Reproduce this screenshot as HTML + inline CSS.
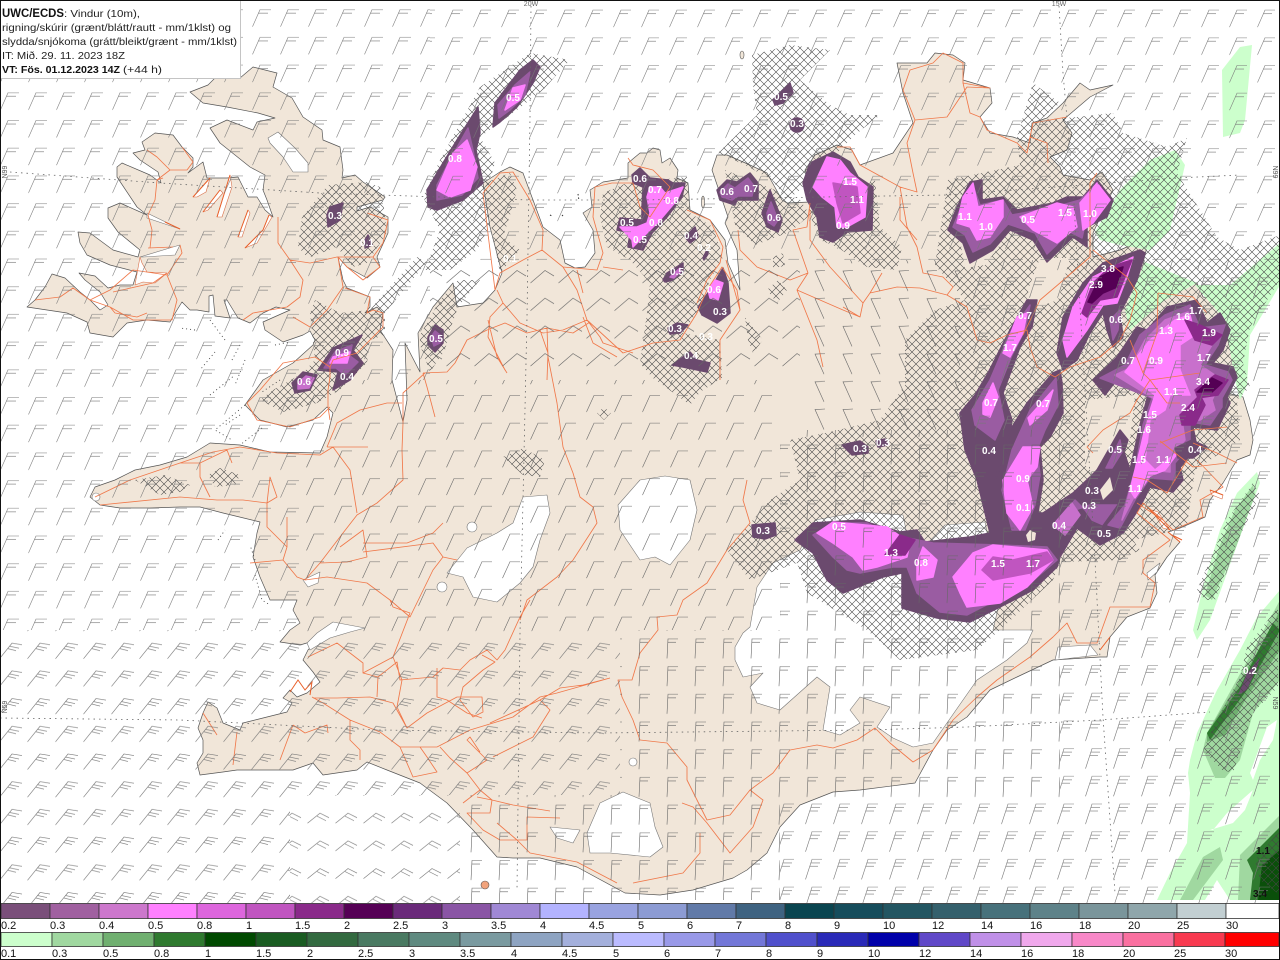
<!DOCTYPE html>
<html><head><meta charset="utf-8"><title>UWC/ECDS</title>
<style>html,body{margin:0;padding:0;background:#fff;width:1280px;height:960px;overflow:hidden}svg{display:block}
text{font-family:"Liberation Sans",sans-serif}
.l text{fill:#fff;font-size:10px;font-weight:bold;text-anchor:middle}
.k text{fill:#111;font-size:11px}
.a{fill:#6b4a6e;stroke:#6b4a6e}.b{fill:#9a5ca2;stroke:#9a5ca2}.c{fill:#c870cc;stroke:#c870cc}.p{fill:#ff80ff;stroke:#ff80ff}.d{fill:#c055c0;stroke:#c055c0}.e{fill:#8a2a8a;stroke:#8a2a8a}.f{fill:#550055;stroke:#550055}
.a,.b,.c,.p,.d,.e,.f{stroke-width:1.5;stroke-linejoin:round}
</style></head><body>
<svg width="1280" height="960" viewBox="0 0 1280 960" xmlns="http://www.w3.org/2000/svg">
<defs>
<pattern id="ph" width="8" height="8" patternUnits="userSpaceOnUse"><path d="M0 0L8 8M8 0L0 8" stroke="#444" stroke-width=".55" fill="none"/></pattern>
<pattern id="pw" x="0" y="120" width="28" height="27.7" patternUnits="userSpaceOnUse"><path d="M.5 17.5L8 .5L19 .5M6.5 4L16 4" stroke="#777" stroke-width=".6" fill="none"/></pattern>
<pattern id="pn" x="25" y="65" width="28" height="27.7" patternUnits="userSpaceOnUse"><path d="M.5 17.5L8 .5L18 .5M6.5 4L15 4" stroke="#777" stroke-width=".6" fill="none"/></pattern>
<pattern id="pe" x="21" y="665" width="28" height="27.7" patternUnits="userSpaceOnUse"><path d="M.5 20.5L7 .5L17 .5M6 4L15 4M5 7.5L13 7.5" stroke="#777" stroke-width=".6" fill="none"/></pattern>
<pattern id="ps" x="27" y="615" width="28" height="27.7" patternUnits="userSpaceOnUse"><path d="M.5 16L13 .5L23 2M10.5 3.5L20 5.5M9 6L17 8" stroke="#777" stroke-width=".6" fill="none"/></pattern>
<pattern id="pt" x="27" y="785" width="28" height="27.7" patternUnits="userSpaceOnUse"><path d="M.5 10.5L13 .5L22 5M10 3.5L19 8" stroke="#777" stroke-width=".6" fill="none"/></pattern>
<pattern id="pl" x="26" y="395" width="28" height="27.7" patternUnits="userSpaceOnUse"><path d="M.5 17L8 .5L18 .5" stroke="#666" stroke-width=".6" fill="none"/></pattern>
<pattern id="pm" x="26" y="270" width="28" height="27.7" patternUnits="userSpaceOnUse"><path d="M.5 13L15 .5L24 6" stroke="#666" stroke-width=".6" fill="none"/></pattern>
<pattern id="pv" x="22" y="583" width="28" height="27.7" patternUnits="userSpaceOnUse"><path d="M1 20L2 .5L12 .5M1.8 4L10 4" stroke="#666" stroke-width=".6" fill="none"/></pattern>
<pattern id="pb" x="2" y="270" width="28" height="27.7" patternUnits="userSpaceOnUse"><path d="M10 21L1 1L11 .5" stroke="#666" stroke-width=".6" fill="none"/></pattern>
</defs>
<rect width="1280" height="960" fill="#fff"/>

<!-- land -->
<polygon fill="#f1e6d9" stroke="#555" stroke-width=".7" stroke-linejoin="round" points="27,307 35,300 45,287 52,274 65,278 80,292 90,300 100,310 108,305 100,292 85,280 79,273 95,276 108,288 120,285 133,285 137,272 110,265 87,255 80,243 78,232 90,233 113,250 138,257 140,250 118,232 108,218 108,208 120,203 147,215 137,207 117,177 117,167 122,163 150,175 161,183 158,172 140,160 133,153 145,150 142,142 155,133 173,135 182,147 193,158 193,167 188,173 203,162 207,178 227,178 238,177 248,197 257,197 265,210 273,217 267,200 263,190 265,175 250,167 220,143 210,128 227,120 253,130 257,122 275,118 258,113 227,107 203,103 190,92 208,85 215,78 240,78 253,67 277,73 273,87 292,98 303,117 322,130 323,140 340,147 343,170 342,178 355,175 363,182 385,197 383,200 357,207 357,211 370,207 388,217 388,233 377,257 380,267 367,278 347,267 338,257 343,280 347,288 370,297 370,307 365,313 377,307 383,313 380,330 393,350 392,380 403,422 407,400 405,343 420,372 418,333 433,307 453,283 457,307 483,303 495,290 502,273 490,227 483,183 500,172 510,167 523,173 533,200 543,227 560,240 565,263 575,268 585,267 595,253 593,230 583,213 592,207 590,190 603,182 628,178 628,163 640,153 647,153 653,148 660,150 662,163 670,158 678,170 677,178 688,183 690,210 710,220 725,240 728,263 740,290 737,250 725,223 728,217 712,170 717,155 727,155 750,165 767,173 782,200 787,203 810,202 812,193 805,170 815,155 837,145 852,150 860,165 893,153 913,123 903,93 897,63 927,63 935,53 953,55 965,63 963,80 990,88 992,103 980,117 990,133 1013,137 1030,143 1032,123 1047,118 1063,103 1080,83 1090,90 1113,85 1090,97 1063,120 1072,133 1067,150 1050,157 1060,167 1063,175 1090,180 1102,172 1113,190 1093,233 1093,257 1120,250 1143,240 1147,247 1143,263 1177,278 1197,283 1203,297 1223,300 1232,330 1227,337 1237,373 1227,393 1243,397 1250,420 1253,440 1250,455 1237,460 1223,483 1210,500 1205,517 1180,528 1168,532 1180,542 1167,557 1155,575 1157,593 1150,608 1127,617 1110,637 1107,657 1100,657 1053,660 1017,677 990,690 967,717 947,730 933,750 915,783 860,790 833,792 800,805 780,827 767,853 747,870 733,878 693,890 660,895 625,893 577,867 540,858 513,858 497,857 473,830 447,803 420,783 387,770 367,762 357,770 323,775 313,763 293,770 267,770 237,770 223,772 200,775 197,763 203,753 203,740 198,728 203,713 208,702 217,708 223,723 240,730 243,723 263,718 287,712 292,703 283,698 290,690 297,697 307,693 320,682 313,672 303,660 308,650 317,640 300,645 280,642 290,630 300,623 293,610 297,600 270,600 260,577 253,557 257,533 260,522 223,513 200,507 180,507 150,508 120,508 100,505 90,497 95,487 115,480 135,470 160,465 187,457 210,443 240,445 270,452 320,453 327,437 333,413 327,407 313,420 287,427 260,420 245,405 263,380 293,363 313,345 315,340 310,331 303,335 283,342 265,330 263,322 290,310 276,307 263,313 250,323 238,318 227,300 224,300 230,318 215,316 213,295 209,296 209,312 197,310 190,310 182,302 177,310 170,322 147,320 127,323 113,337 90,333 87,322 67,313"/>
<!-- islands -->
<ellipse cx="742" cy="55" rx="2" ry="4" fill="#f1e6d9" stroke="#555" stroke-width=".6"/>
<ellipse cx="703" cy="202" rx="1.5" ry="6" fill="#f1e6d9" stroke="#555" stroke-width=".6"/>
<ellipse cx="485" cy="885" rx="4" ry="4" fill="#f1a37c" stroke="#555" stroke-width=".6"/>
<path d="M578 194l1 7M562 215l1 1M550 215l2 1" stroke="#333" stroke-width="1" stroke-dasharray="1.5 2" fill="none"/>

<!-- fjords, lakes, white -->
<g fill="#fff" stroke="#777" stroke-width=".6" stroke-linejoin="round">
<polygon points="140,257 173,247 180,245 175,255 143,257"/>
<polygon points="140,257 135,285 143,282 155,283 167,273 147,272 142,263" stroke="#d8704a"/>
<polygon points="147,213 180,229 165,224 147,218"/>
<polygon points="193,197 210,178 206,192 197,197" stroke="#d8704a"/>
<polygon points="203,212 220,190 223,193 208,210" stroke="#d8704a"/>
<polygon points="217,217 230,175 232,187 222,217" stroke="#d8704a"/>
<polygon points="238,237 248,210 250,213 242,237" stroke="#d8704a"/>
<polygon points="245,248 263,230 269,215 272,217 257,243" stroke="#d8704a"/>
<polygon points="307,643 317,633 333,622 365,628 350,632 330,638 310,650"/>
<polygon points="303,580 320,572 318,583 308,587"/>
<polygon points="1058,647 1090,645 1098,655 1055,660"/>
<polygon points="1152,510 1158,512 1170,530 1163,528" stroke="#d8704a"/>
<polygon points="1210,490 1223,495 1222,499 1212,495" stroke="#d8704a"/>
<polygon points="1147,573 1160,563 1157,572 1148,580"/>
<!-- glaciers -->
<polygon points="268,138 278,132 295,148 308,163 308,172 293,172 283,157 270,143"/>
<polygon points="447,573 467,548 497,533 513,523 523,497 547,495 550,513 540,540 533,567 520,583 497,602 473,597 463,577"/>
<circle cx="472" cy="527" r="5"/><circle cx="442" cy="587" r="5"/>
<polygon points="618,505 640,480 665,476 690,480 697,510 690,540 670,565 655,557 640,560 620,530"/>
<circle cx="633" cy="762" r="4"/>
<polygon points="600,803 623,792 650,803 655,827 663,847 650,857 610,853 590,853 587,833"/>
<polygon points="550,827 580,830 573,843 557,838"/>
<circle cx="96" cy="497" r="4"/>
<polygon points="735,647 743,633 750,627 757,587 773,563 800,550 815,520 860,512 903,515 912,560 945,525 985,522 1000,600 993,630 1033,630 1027,643 1007,660 977,680 963,700 933,743 913,747 893,738 877,727 890,707 860,697 850,710 860,723 840,735 823,730 830,687 817,677 780,710 757,703 750,687 763,673 743,677 735,660"/>
</g>

<!-- green precipitation -->
<g fill="#ccffcc">
<polygon points="1150,160 1175,150 1185,165 1170,230 1150,250 1120,245 1100,240 1095,232 1120,190"/>
<polygon points="1145,262 1197,283 1165,300 1130,330 1125,310"/>
<polygon points="1222,70 1240,47 1252,45 1245,120 1240,133 1223,137"/>
<polygon points="1280,243 1280,285 1250,335 1247,385 1240,400 1235,380 1225,320 1195,285 1230,285"/>
<polygon points="1257,472 1260,483 1247,517 1227,573 1210,620 1197,640 1193,630 1203,587 1220,530 1237,493"/>
<polygon points="1280,590 1257,617 1240,650 1217,690 1197,733 1190,760 1188,773 1190,793 1187,843 1170,873 1157,900 1280,900"/>
<polygon fill="#fff" points="1250,773 1267,727 1277,720 1273,740 1260,760 1253,780"/>
<polygon fill="#fff" points="1213,830 1227,813 1253,790 1245,810 1233,823 1210,830"/>
<polygon fill="#fff" points="1217,880 1230,900 1205,900"/>
<polygon fill="#a0d8a0" points="1253,485 1255,495 1235,550 1212,600 1205,595 1220,545 1235,510"/>
<polygon fill="#a0d8a0" points="1280,600 1280,680 1253,713 1240,760 1225,778 1215,778 1203,750 1207,733 1245,665"/>
<polygon fill="#70b070" points="1280,610 1280,650 1247,697 1225,735 1207,742 1207,733 1240,680 1265,640"/>
<polygon fill="#2f7a2f" points="1273,623 1280,630 1247,690 1210,740 1207,733 1240,687 1260,647"/>
<polygon fill="#a0d8a0" points="1220,847 1203,857 1180,900 1193,900 1223,860"/>
<polygon fill="#a0d8a0" points="1280,815 1240,855 1238,900 1280,900"/>
<polygon fill="#2f7a2f" points="1280,827 1247,860 1253,873 1250,900 1280,900"/>
<polygon fill="#0a4f0a" points="1280,850 1262,865 1258,900 1280,900"/>
<polygon fill="#6b4a6e" points="1260,657 1258,665 1247,690 1238,695 1247,673"/>
</g>

<!-- hatching -->
<g fill="url(#ph)">
<polygon points="302,217 328,185 367,182 380,187 383,200 387,233 367,263 353,267 337,247 308,258 298,247"/>
<polygon points="378,300 417,257 427,262 385,313 385,335 370,340 367,363 340,390 317,403 283,412 260,400 273,390 303,373 315,360 310,313 315,300 340,313 370,310"/>
<polygon points="440,300 458,280 480,280 458,307 450,330 445,350 430,372 420,345 420,335"/>
<polygon points="423,197 440,160 480,87 530,53 570,60 543,90 513,113 480,137 495,163 487,190 490,225 477,250 450,270 425,270 440,230"/>
<polygon points="485,183 510,173 517,190 510,215 503,237 520,250 500,273 492,230"/>
<polygon points="603,193 627,183 687,177 690,213 713,227 723,257 710,280 700,307 683,333 720,340 722,378 700,392 690,405 653,378 640,363 647,313 650,283 630,260 607,247 600,217"/>
<polygon points="752,55 790,45 830,50 800,80 830,105 850,115 880,115 855,135 830,160 800,190 787,200 772,180 745,165 718,153 757,115 753,85"/>
<polygon points="725,170 800,200 810,215 790,232 755,245 735,225"/>
<polygon points="808,210 875,180 880,227 902,247 897,270 867,267 837,247 820,240"/>
<polygon points="773,257 783,253 785,266 773,268"/>
<polygon points="767,290 778,280 787,290 777,303"/>
<polygon points="745,317 763,340 753,353 748,340"/>
<polygon points="503,457 523,448 545,460 540,477 523,475"/>
<polygon points="208,475 220,468 240,475 235,485 215,487"/>
<polygon points="135,480 165,475 190,485 180,492 160,495"/>
<polygon points="604,407 611,413 604,420 597,413"/>
<polygon points="948,180 1020,165 1017,137 1033,83 1060,103 1040,120 1077,117 1113,113 1123,133 1167,147 1187,138 1177,173 1217,237 1240,250 1280,235 1280,280 1250,327 1243,363 1250,387 1237,400 1240,440 1195,470 1187,525 1170,532 1133,540 1140,550 1120,560 1060,562 1053,580 1000,630 977,650 900,660 867,630 807,593 797,563 750,580 727,550 770,500 800,480 790,440 830,432 880,420 905,385 905,340 935,310 965,300 935,265"/>
<polygon points="1253,483 1260,495 1238,540 1215,600 1205,600 1197,590 1210,560 1227,520"/>
<polygon points="1247,647 1278,607 1278,687 1253,713 1233,773 1222,770 1203,750 1217,720 1240,677"/>
<polygon points="1280,830 1255,860 1260,880 1280,895"/>
</g>
<!-- unhatched land patches -->
<g fill="#f1e6d9">
<polygon points="1040,258 1070,258 1058,300 1030,310 1028,290"/>
<polygon points="1085,400 1135,395 1130,440 1100,480 1085,465"/>
<polygon points="960,240 1000,245 985,265 965,268"/>
</g>

<!-- purple precipitation -->
<g>
<polygon class="a" points="428,207 427,190 443,163 457,140 478,107 480,133 476,150 483,183 463,200 437,210"/>
<polygon class="b" points="437,200 437,185 450,160 468,128 473,150 478,178 462,195"/>
<polygon class="p" points="437,190 453,153 467,140 477,167 470,190 450,197"/>
<polygon class="a" points="493,127 495,103 520,70 533,60 540,67 533,83 517,107 500,122"/>
<polygon class="b" points="499,118 498,105 515,85 530,72 525,95 510,110"/>
<polygon class="p" points="505,110 513,88 525,85 520,100"/>
<polygon class="a" points="327,215 330,207 343,203 340,220 328,227"/>
<polygon class="a" points="365,240 368,235 372,245 365,248"/>
<polygon class="a" points="318,370 333,348 362,335 353,350 363,363 350,380 333,390 338,372"/>
<polygon class="b" points="324,368 335,352 352,345 350,356 358,362 345,375 336,368"/>
<polygon class="p" points="333,357 350,352 347,363 330,363"/>
<polygon class="a" points="292,383 303,372 317,375 310,390 295,393"/>
<polygon class="c" points="298,383 306,376 314,378 309,388 298,389"/>
<polygon class="a" points="428,337 435,325 443,330 443,343 435,352 428,345"/>
<polygon class="b" points="431,337 435,331 440,335 440,343 434,346"/>
<polygon class="a" points="632,175 640,168 650,178 668,180 673,183 685,183 682,197 667,217 652,233 643,250 628,247 630,233 617,230 620,218 642,220 642,207 643,187 633,183"/>
<polygon class="p" points="647,197 650,187 660,187 665,193 683,187 677,200 660,220 650,230 633,247 632,240 620,227 637,227 647,223 650,213"/>
<polygon class="a" points="685,237 695,227 698,237 690,243"/>
<polygon class="a" points="703,258 707,250 708,254 704,260"/>
<polygon class="a" points="663,280 667,273 683,263 683,273 673,280 665,282"/>
<polygon class="c" points="670,277 680,268 680,272 674,278"/>
<polygon class="a" points="698,307 710,290 723,268 728,283 730,313 717,323 702,315"/>
<polygon class="p" points="708,290 715,280 723,283 718,300 710,298"/>
<polygon class="a" points="668,328 677,323 688,325 680,333 670,334"/>
<polygon class="a" points="672,365 690,352 697,360 710,363 707,372 683,367"/>
<polygon class="a" points="717,190 727,180 737,182 750,173 758,183 758,200 737,200 735,205 720,200"/>
<polygon class="b" points="720,192 728,184 735,188 748,178 754,186 752,196 738,196 732,200 722,197"/>
<polygon class="a" points="762,213 770,190 782,220 778,232 767,227"/>
<polygon class="b" points="767,213 771,202 778,220 774,226 768,222"/>
<polygon class="a" points="773,100 790,83 793,93 783,103 775,105"/>
<circle class="a" cx="797" cy="125" r="7"/>
<polygon class="a" points="803,183 810,163 833,152 850,162 858,177 873,187 872,230 847,232 833,242 820,237 817,217 807,200"/>
<polygon class="p" points="813,187 827,157 840,160 850,173 867,187 865,217 847,227 837,227 835,207 822,197"/>
<polygon class="d" points="833,183 857,187 860,213 843,223 837,203"/>
<polygon class="a" points="948,230 957,207 970,182 982,180 982,200 1003,197 1017,210 1053,203 1067,197 1083,197 1097,180 1113,200 1107,217 1087,227 1087,247 1073,237 1047,262 1033,240 1010,230 993,250 970,263 963,243"/>
<polygon class="b" points="953,227 962,205 973,186 980,205 1003,200 1012,215 1055,207 1080,200 1097,184 1110,200 1085,225 1082,238 1070,232 1047,254 1035,233 1008,224 990,244 973,252 965,235"/>
<polygon class="p" points="957,223 963,197 973,183 978,207 1003,200 1003,217 990,237 977,240 970,227"/>
<polygon class="p" points="1020,217 1057,203 1073,207 1077,227 1057,243 1033,230"/>
<polygon class="p" points="1080,203 1097,183 1110,200 1093,223 1083,230"/>
<polygon class="a" points="1140,250 1145,253 1137,280 1120,313 1123,337 1113,347 1107,330 1103,313 1090,333 1077,360 1063,370 1057,353 1063,317 1083,283 1103,263"/>
<polygon class="p" points="1133,257 1127,277 1117,303 1103,305 1087,330 1067,357 1063,340 1073,307 1093,277"/>
<polygon class="e" points="1132,260 1125,277 1117,297 1100,300 1087,317 1082,313 1093,283 1110,267"/>
<polygon class="f" points="1123,267 1117,287 1103,293 1092,303 1088,302 1100,277 1113,270"/>
<polygon class="b" points="1110,320 1120,310 1118,330 1113,340"/>
<!-- legs -->
<polygon class="a" points="1027,300 1037,300 1032,327 1020,347 1003,393 1012,420 1007,453 995,480 1012,427 1027,403 1053,373 1060,370 1062,383 1063,413 1050,437 1040,447 1043,480 1038,513 1043,513 1073,493 1090,477 1107,460 1115,470 1120,440 1130,470 1123,533 1100,545 1077,528 1060,557 1057,567 1033,590 1000,607 970,622 937,618 902,608 902,573 883,577 843,593 827,580 813,553 795,540 813,523 860,520 900,532 917,530 925,542 970,537 990,533 977,480 965,450 960,413 975,395 988,373 1010,330"/>
<polygon class="a" points="1097,470 1120,430 1128,440 1118,470 1100,482"/>
<polygon class="b" points="1106,468 1120,440 1122,452 1112,468"/>
<polygon class="b" points="1010,333 1030,305 1025,330 1012,355 998,390 1004,420 995,440 975,425 972,410 990,380"/>
<polygon class="b" points="1030,410 1056,378 1058,405 1045,430 1037,450 1040,475 1035,505 1025,530 1012,530 1002,490 1012,450"/>
<polygon class="p" points="1017,317 1027,313 1023,333 1010,357 1003,353"/>
<polygon class="p" points="983,403 993,383 998,397 990,417 983,414"/>
<polygon class="p" points="1053,390 1047,410 1030,425 1028,418"/>
<polygon class="p" points="1003,480 1023,447 1040,447 1037,467 1027,480 1033,507 1020,530 1007,513"/>
<polygon class="b" points="1060,520 1075,500 1085,510 1092,520 1115,530 1118,505 1090,505 1075,510"/>
<polygon class="c" points="1053,525 1072,503 1080,515 1065,535"/>
<polygon class="b" points="813,535 833,523 867,523 893,535 933,543 1000,545 1047,547 1057,560 1030,583 1000,598 967,615 940,612 917,593 907,567 893,567 860,573 847,570 833,557"/>
<polygon class="p" points="817,533 833,522 887,527 910,543 907,557 877,567 863,570 853,557 833,543"/>
<polygon class="p" points="917,563 923,547 937,560 933,577 917,580"/>
<polygon class="p" points="953,577 973,553 993,545 1047,550 1053,560 1027,587 1000,603 967,607 960,593"/>
<polygon class="d" points="982,570 993,557 1013,560 1047,552 1053,560 1030,573 993,580"/>
<polygon class="e" points="885,555 900,535 915,540 905,555"/>
<polygon fill="#f1e6d9" points="1026,535 1030,530 1036,533 1035,540 1028,542"/>
<!-- east mass -->
<polygon class="a" points="1093,380 1117,357 1137,327 1147,330 1167,307 1197,300 1207,323 1220,313 1230,330 1223,350 1213,363 1233,367 1237,377 1227,397 1230,403 1217,430 1193,427 1197,447 1180,467 1183,480 1173,492 1150,487 1140,507 1123,533 1100,530 1118,505 1130,470 1140,425 1148,395 1120,385 1115,382 1105,395"/>
<polygon class="b" points="1100,378 1125,365 1140,335 1165,315 1190,305 1200,328 1225,325 1218,345 1205,365 1228,372 1232,380 1222,398 1222,407 1210,425 1190,422 1190,445 1175,463 1175,480 1150,478 1135,500 1120,528 1108,525 1125,505 1135,470 1143,425 1152,398"/>
<polygon class="c" points="1115,375 1130,368 1145,340 1165,320 1188,312 1196,335 1215,340 1200,365 1222,380 1212,400 1215,410 1200,420 1182,420 1185,440 1170,458 1170,472 1150,470 1135,495 1122,520 1130,490 1140,460 1148,430 1156,400"/>
<polygon class="p" points="1125,372 1150,340 1175,320 1190,315 1195,335 1180,345 1180,370 1190,395 1170,395 1165,410 1150,420 1145,460 1155,470 1180,450 1165,470 1150,476 1135,498 1130,490 1140,450 1147,420 1155,395"/>
<polygon class="e" points="1185,320 1200,325 1222,335 1212,345 1195,340"/>
<polygon class="e" points="1195,390 1215,375 1228,380 1218,395 1198,398"/>
<polygon class="f" points="1197,392 1212,378 1222,383 1212,392"/>
<polygon class="e" points="1180,415 1200,395 1205,405 1195,425 1182,425"/>
<polygon class="a" points="1175,448 1192,440 1207,447 1193,458 1178,458"/>
<polygon class="a" points="752,525 775,523 776,535 765,539 753,537"/>
<polygon class="a" points="842,445 860,441 868,447 868,453 852,455"/>
<polygon class="a" points="876,441 885,439 888,445 878,447"/>
<polygon fill="#f1e6d9" points="1100,490 1110,477 1113,490 1103,500"/>
</g>

<!-- roads -->
<path fill="none" stroke="#f0784a" stroke-width=".85" stroke-linejoin="round" d="M312 697L323 703L350 720L380 732L400 747L420 747L437 747L470 730L513 717L540 697L557 693L610 678M313 698L337 698L370 697L393 703L407 728L397 707L402 680L393 657L410 613L393 607L390 600M400 747L413 777L437 772L427 757L420 747M293 725L280 760M293 725L305 733L327 725L328 733M350 720L350 740L360 750L360 760M237 732L233 765M203 713L217 735M308 657L337 643L363 663L363 673L393 657M378 677L377 697M363 673L378 677L397 662L400 680L433 677L443 668L460 670L470 660L487 650L497 660L505 650L520 617L530 600M437 668L437 697L447 700L467 713L482 718M407 728L427 713L457 697L482 697L483 712L473 717L460 700L463 687L483 670L495 662L482 655M440 747L450 758L467 773L480 790L492 800L513 805L550 811M467 773L487 760L467 740L470 737L480 752M493 757L513 747L533 737L550 710L540 700L490 723M540 700L560 688L583 685L610 678M480 790L463 803M477 797L492 800L490 813L467 813L483 830L500 840L527 840L527 817L560 818M497 823L517 840L530 853L577 862L617 883M747 480L743 500L750 523L727 550L707 583L683 600L677 615L657 617L658 630L640 653L632 680L618 680L622 697L633 720L640 740L667 743L687 767L687 780L697 800L707 820L730 815L750 790L773 773L790 750L817 745L833 748L857 740L875 728L890 743L913 762L933 750L953 720L977 697L997 680L1030 657L1053 637L1067 623L1077 643L1097 643L1110 607L1140 607L1150 607L1155 583L1143 573L1143 560L1170 540L1137 513L1143 503L1163 520L1173 530L1203 517L1200 500L1223 487L1197 460M750 790L763 800L753 827L730 853L707 823L693 807L682 803M700 833L700 853L683 873L633 883M305 580L320 563L343 533L357 515L377 503L403 480L402 450L403 423L403 393L425 373M180 463L213 452L240 447L277 453L320 455L333 447L350 470L357 513M180 497L217 500L243 500L267 503L270 477L277 497L267 503L267 527L287 547L283 560L297 577L305 580M287 517L287 547M250 563L283 560M320 563L347 562L367 557L363 530L340 547M363 543L407 543L433 533L443 523M363 552L433 543L443 557L457 560M390 600L367 583L327 577L305 580M390 600L410 617L433 570L443 557M327 447L337 423L360 410L387 403L402 403M327 447L368 447M423 373L447 372L455 363L467 340L487 330L505 323L527 333L547 328L573 333L590 322M547 328L548 357L557 403L563 447L573 473L580 497L593 507L597 523L573 560L557 577L527 600L520 620M435 417L427 387L423 373M488 320L497 357L507 373M583 317L593 343L617 357M495 290L490 250L483 193L500 173L513 172L530 200L543 230L542 250L523 260L500 273L495 290M542 250L563 267L577 290L587 320L623 353L653 343L680 340L697 313L707 290L722 267L737 290L740 310L720 340L720 380M497 290L503 303L520 323L543 333L563 330L587 320M503 303L490 317L488 337L505 370M540 330L548 353L547 380M577 270L583 293M563 267L597 270L603 253L593 217L595 187L612 183L633 183L640 207L650 217L670 187L653 170L633 165L628 158M603 267L623 270M587 320L600 337L603 343L633 353M687 210L710 220L723 247L720 263L707 280L697 303M726 260L740 310M738 230L740 250L757 267L790 280L808 273L797 290L817 340L823 367M808 273L793 230L807 227L810 203M797 290L843 310L860 317M837 147L850 147L860 165L900 187L917 192L913 173L907 143L915 120L903 90L910 70L933 63L943 53L963 63L963 83L990 88L967 87L947 117L915 120M963 83L970 113L980 117L987 130L1017 143L1027 153L1030 137L1047 143L1048 163M1030 137L1033 123L1067 117M900 187L907 227L917 247L923 273L943 277L953 287L947 295L967 307L977 340L990 343L1007 335L1027 330L1030 347L1037 367L1055 377L1070 367L1100 357L1120 340L1130 320L1137 293L1127 277L1093 250M900 197L900 220L917 240M947 295L920 288L897 287L870 293L863 303L860 317L843 307M870 293L882 273M810 210L810 240L830 267L863 303M1023 335L1040 300L1060 283L1090 257L1090 183L1097 173M1130 340L1143 373L1150 380L1200 373M1150 380L1167 403L1180 403M1150 380L1137 400L1130 413L1103 430L1087 447L1093 453M1158 293L1193 297L1207 313M1158 293L1157 333L1143 373M1160 443L1193 430L1227 427M1160 441L1193 467L1227 463M1193 443L1217 453L1237 463M1133 477L1147 480L1167 493L1187 460M1137 503L1163 520M35 300L60 297L73 288L90 300L110 307L133 320L160 320L172 320L177 300L167 275L182 253L180 245M167 275L133 270L110 290L90 300M110 307L115 313L137 317L147 313M167 273L153 283L113 292M150 248L152 230L148 215L155 200L157 180L170 170L187 170L193 162L182 147M170 170L157 157L147 150M157 180L163 178M148 248L173 247M278 243L290 260L303 280L300 297L287 307L253 313L243 320M290 260L310 263L337 257L353 257M338 257L343 287L327 310L310 327L293 317M345 288L370 297L367 313L373 310L383 313L383 327L357 353L333 360L330 367L330 377L328 390L328 407L330 420M247 403L260 390L283 363L315 357L330 367M330 407L320 417L290 427L257 420L247 403M278 217L278 243M367 213L388 220L383 243L373 257L353 257M373 257L380 267L363 280L347 267L338 257M227 450L232 463M227 450L200 463L180 463M200 463L200 477L210 497M95 497L130 480L180 463M100 505L180 497"/>
<!-- fjord orange edges -->
<path fill="none" stroke="#e9602a" stroke-width="1" d="M180 229L165 222M193 197L210 178M203 212L220 190M217 217L230 175M238 237L248 210M245 248L263 230L269 215M1210 490L1223 495M1150 510L1170 530M1168 532L1180 542M1100 650L1110 637M290 692L298 680L305 690L312 682L310 695M1172 535l10 5"/>

<!-- small dark islands -->
<path fill="none" stroke="#444" stroke-width=".9" stroke-dasharray="1 3" d="M210 320L225 340M240 345L232 360M215 352L200 370M195 330L180 328M245 360L235 385M210 395L235 375M245 405L215 430L232 440M240 415L225 425M275 345L290 342M280 380L262 392M262 428L240 445M255 575L262 600L270 605M255 560L250 545M218 540L225 530"/>

<!-- graticule -->
<path fill="none" stroke="#666" stroke-width=".8" stroke-dasharray="1.5 4" d="M10 172L160 183L320 193L530 200L640 200L947 195L1177 178L1240 175M0 718L180 720L380 730L600 733L867 730L967 727L1100 720L1210 712M531 6L530 117L527 317L523 500L520 633L517 890M1059 6L1063 73L1073 187L1095 560L1103 717L1115 893"/>
<text x="531" y="6" font-size="7" fill="#666" text-anchor="middle">20W</text>
<text x="1059" y="6" font-size="7" fill="#666" text-anchor="middle">15W</text>
<text transform="translate(7,172) rotate(-90)" font-size="7" fill="#555" text-anchor="middle">N99</text>
<text transform="translate(7,707) rotate(-90)" font-size="7" fill="#555" text-anchor="middle">N59</text>
<text transform="translate(1273,172) rotate(90)" font-size="7" fill="#555" text-anchor="middle">N99</text>
<text transform="translate(1273,703) rotate(90)" font-size="7" fill="#555" text-anchor="middle">N59</text>

<!-- wind barbs -->
<g>
<rect x="0" y="0" width="430" height="380" fill="url(#pw)"/>
<rect x="0" y="380" width="300" height="250" fill="url(#pw)"/>
<rect x="0" y="630" width="620" height="165" fill="url(#ps)"/>
<rect x="0" y="795" width="290" height="108" fill="url(#ps)"/>
<rect x="290" y="795" width="170" height="108" fill="url(#pt)"/>
<rect x="300" y="380" width="480" height="250" fill="url(#pl)"/>
<rect x="430" y="0" width="850" height="260" fill="url(#pn)"/>
<rect x="430" y="260" width="370" height="120" fill="url(#pm)"/>
<rect x="800" y="260" width="160" height="170" fill="url(#pb)"/>
<rect x="780" y="430" width="280" height="370" fill="url(#pv)"/>
<rect x="620" y="630" width="160" height="270" fill="url(#pv)"/>
<rect x="960" y="260" width="320" height="170" fill="url(#pe)"/>
<rect x="1060" y="430" width="220" height="473" fill="url(#pe)"/>
<rect x="780" y="800" width="280" height="103" fill="url(#pe)"/>
<rect x="460" y="795" width="160" height="108" fill="url(#pv)"/>
</g>

<!-- labels -->
<g class="l">
<text x="513" y="101">0.5</text><text x="455" y="162">0.8</text><text x="335" y="219">0.3</text>
<text x="640" y="182">0.6</text><text x="655" y="193">0.7</text><text x="672" y="204">0.8</text><text x="627" y="226">0.5</text><text x="656" y="226">0.8</text><text x="640" y="243">0.5</text><text x="691" y="239">0.4</text><text x="704" y="251">0.2</text><text x="677" y="275">0.5</text><text x="714" y="293">0.6</text><text x="720" y="315">0.3</text><text x="675" y="332">0.3</text><text x="691" y="359">0.4</text><text x="706" y="340">0.3</text>
<text x="727" y="195">0.6</text><text x="751" y="192">0.7</text><text x="774" y="221">0.6</text><text x="781" y="100">0.5</text><text x="797" y="127">0.3</text>
<text x="850" y="185">1.5</text><text x="857" y="203">1.1</text><text x="843" y="229">0.9</text>
<text x="965" y="220">1.1</text><text x="986" y="230">1.0</text><text x="1028" y="223">0.5</text><text x="1065" y="216">1.5</text><text x="1090" y="217">1.0</text>
<text x="1108" y="272">3.8</text><text x="1096" y="288">2.9</text><text x="1116" y="323">0.6</text><text x="1025" y="319">0.7</text><text x="1010" y="351">1.7</text><text x="991" y="406">0.7</text><text x="1043" y="407">0.7</text><text x="989" y="454">0.4</text>
<text x="1128" y="364">0.7</text><text x="1156" y="364">0.9</text><text x="1166" y="334">1.3</text><text x="1183" y="320">1.6</text><text x="1196" y="314">1.7</text><text x="1209" y="336">1.9</text><text x="1204" y="361">1.7</text><text x="1203" y="385">3.4</text><text x="1188" y="411">2.4</text><text x="1171" y="395">1.1</text><text x="1150" y="418">1.5</text><text x="1144" y="433">1.6</text><text x="1115" y="453">0.5</text><text x="1139" y="463">1.5</text><text x="1163" y="463">1.1</text><text x="1195" y="453">0.4</text><text x="1135" y="492">1.1</text>
<text x="1023" y="482">0.9</text><text x="1023" y="511">0.1</text><text x="1059" y="529">0.4</text><text x="1092" y="494">0.3</text><text x="1089" y="509">0.3</text><text x="1104" y="537">0.5</text>
<text x="839" y="530">0.5</text><text x="891" y="556">1.3</text><text x="921" y="566">0.8</text><text x="998" y="567">1.5</text><text x="1033" y="567">1.7</text>
<text x="763" y="534">0.3</text><text x="860" y="452">0.3</text><text x="883" y="446">0.3</text>
<text x="342" y="356">0.9</text><text x="347" y="380">0.4</text><text x="304" y="385">0.6</text><text x="436" y="342">0.5</text><text x="1250" y="674">0.2</text><text x="367" y="246">0.1</text><text x="510" y="262">0.1</text>
</g>
<text x="1263" y="854" font-size="10" font-weight="bold" fill="#111" text-anchor="middle">1.1</text>
<text x="1260" y="897" font-size="10" font-weight="bold" fill="#111" text-anchor="middle">3.4</text>

<!-- title box -->
<rect x="0" y="0" width="240.5" height="78.5" fill="#fff" stroke="#c4c4c4" stroke-width="1"/>
<text x="2" y="17" font-size="11.5" font-weight="bold" fill="#111" textLength="62" lengthAdjust="spacingAndGlyphs">UWC/ECDS</text>
<text x="64" y="17" font-size="10.5" fill="#222" textLength="76" lengthAdjust="spacingAndGlyphs">: Vindur (10m),</text>
<text x="2" y="31" font-size="10.5" fill="#222" textLength="229" lengthAdjust="spacingAndGlyphs">rigning/skúrir (grænt/blátt/rautt - mm/1klst) og</text>
<text x="2" y="45" font-size="10.5" fill="#222" textLength="235" lengthAdjust="spacingAndGlyphs">slydda/snjókoma (grátt/bleikt/grænt - mm/1klst)</text>
<text x="2" y="59" font-size="10.5" fill="#222" textLength="123" lengthAdjust="spacingAndGlyphs">IT: Mið. 29. 11. 2023 18Z</text>
<text x="2" y="73" font-size="10.5" font-weight="bold" fill="#111" textLength="118" lengthAdjust="spacingAndGlyphs">VT: Fös. 01.12.2023 14Z</text>
<text x="123" y="73" font-size="10.5" fill="#222" textLength="39" lengthAdjust="spacingAndGlyphs">(+44 h)</text>

<!-- legend -->
<rect x="0" y="903" width="1280" height="57" fill="#fff"/>
<g stroke="#333" stroke-width=".8">
<rect x="1" y="903.5" width="49" height="15" fill="#7a4f7a"/><rect x="50" y="903.5" width="49" height="15" fill="#a060a0"/><rect x="99" y="903.5" width="49" height="15" fill="#cc77cc"/><rect x="148" y="903.5" width="49" height="15" fill="#ff80ff"/><rect x="197" y="903.5" width="49" height="15" fill="#dd66dd"/><rect x="246" y="903.5" width="49" height="15" fill="#c055c0"/><rect x="295" y="903.5" width="49" height="15" fill="#8a2a8a"/><rect x="344" y="903.5" width="49" height="15" fill="#550055"/><rect x="393" y="903.5" width="49" height="15" fill="#6a2a7a"/><rect x="442" y="903.5" width="49" height="15" fill="#8a55a5"/><rect x="491" y="903.5" width="49" height="15" fill="#a088d5"/><rect x="540" y="903.5" width="49" height="15" fill="#b3b3ff"/><rect x="589" y="903.5" width="49" height="15" fill="#99a3e0"/><rect x="638" y="903.5" width="49" height="15" fill="#8c9bd3"/><rect x="687" y="903.5" width="49" height="15" fill="#617aa8"/><rect x="736" y="903.5" width="49" height="15" fill="#3f6381"/><rect x="785" y="903.5" width="49" height="15" fill="#0a4550"/><rect x="834" y="903.5" width="49" height="15" fill="#164d5c"/><rect x="883" y="903.5" width="49" height="15" fill="#235662"/><rect x="932" y="903.5" width="49" height="15" fill="#34606c"/><rect x="981" y="903.5" width="49" height="15" fill="#47717b"/><rect x="1030" y="903.5" width="49" height="15" fill="#5e8289"/><rect x="1079" y="903.5" width="49" height="15" fill="#7a959b"/><rect x="1128" y="903.5" width="49" height="15" fill="#8fa6ab"/><rect x="1177" y="903.5" width="49" height="15" fill="#c2cfd2"/><rect x="1226" y="903.5" width="53" height="15" fill="#ffffff"/>
<rect x="1" y="932.5" width="51" height="14" fill="#ccffcc"/><rect x="52" y="932.5" width="51" height="14" fill="#a0d8a0"/><rect x="103" y="932.5" width="51" height="14" fill="#70b070"/><rect x="154" y="932.5" width="51" height="14" fill="#2f7a2f"/><rect x="205" y="932.5" width="51" height="14" fill="#004a00"/><rect x="256" y="932.5" width="51" height="14" fill="#1a5c22"/><rect x="307" y="932.5" width="51" height="14" fill="#336a40"/><rect x="358" y="932.5" width="51" height="14" fill="#4a7a62"/><rect x="409" y="932.5" width="51" height="14" fill="#5f8a80"/><rect x="460" y="932.5" width="51" height="14" fill="#7a9aa0"/><rect x="511" y="932.5" width="51" height="14" fill="#8ea4c2"/><rect x="562" y="932.5" width="51" height="14" fill="#a4b0dc"/><rect x="613" y="932.5" width="51" height="14" fill="#bbbbff"/><rect x="664" y="932.5" width="51" height="14" fill="#9999e8"/><rect x="715" y="932.5" width="51" height="14" fill="#7377d8"/><rect x="766" y="932.5" width="51" height="14" fill="#5050cc"/><rect x="817" y="932.5" width="51" height="14" fill="#2a2ab8"/><rect x="868" y="932.5" width="51" height="14" fill="#0000aa"/><rect x="919" y="932.5" width="51" height="14" fill="#6048c8"/><rect x="970" y="932.5" width="51" height="14" fill="#c090e8"/><rect x="1021" y="932.5" width="51" height="14" fill="#f0a8ec"/><rect x="1072" y="932.5" width="51" height="14" fill="#f888c8"/><rect x="1123" y="932.5" width="51" height="14" fill="#fa70a0"/><rect x="1174" y="932.5" width="51" height="14" fill="#f83a50"/><rect x="1225" y="932.5" width="54" height="14" fill="#ff0000"/>
</g>
<g class="k">
<text x="1" y="929">0.2</text><text x="50" y="929">0.3</text><text x="99" y="929">0.4</text><text x="148" y="929">0.5</text><text x="197" y="929">0.8</text><text x="246" y="929">1</text><text x="295" y="929">1.5</text><text x="344" y="929">2</text><text x="393" y="929">2.5</text><text x="442" y="929">3</text><text x="491" y="929">3.5</text><text x="540" y="929">4</text><text x="589" y="929">4.5</text><text x="638" y="929">5</text><text x="687" y="929">6</text><text x="736" y="929">7</text><text x="785" y="929">8</text><text x="834" y="929">9</text><text x="883" y="929">10</text><text x="932" y="929">12</text><text x="981" y="929">14</text><text x="1030" y="929">16</text><text x="1079" y="929">18</text><text x="1128" y="929">20</text><text x="1177" y="929">25</text><text x="1226" y="929">30</text>
<text x="1" y="957">0.1</text><text x="52" y="957">0.3</text><text x="103" y="957">0.5</text><text x="154" y="957">0.8</text><text x="205" y="957">1</text><text x="256" y="957">1.5</text><text x="307" y="957">2</text><text x="358" y="957">2.5</text><text x="409" y="957">3</text><text x="460" y="957">3.5</text><text x="511" y="957">4</text><text x="562" y="957">4.5</text><text x="613" y="957">5</text><text x="664" y="957">6</text><text x="715" y="957">7</text><text x="766" y="957">8</text><text x="817" y="957">9</text><text x="868" y="957">10</text><text x="919" y="957">12</text><text x="970" y="957">14</text><text x="1021" y="957">16</text><text x="1072" y="957">18</text><text x="1123" y="957">20</text><text x="1174" y="957">25</text><text x="1225" y="957">30</text>
</g>
<rect x=".5" y=".5" width="1279" height="959" fill="none" stroke="#111" stroke-width="1"/>
</svg>
</body></html>
